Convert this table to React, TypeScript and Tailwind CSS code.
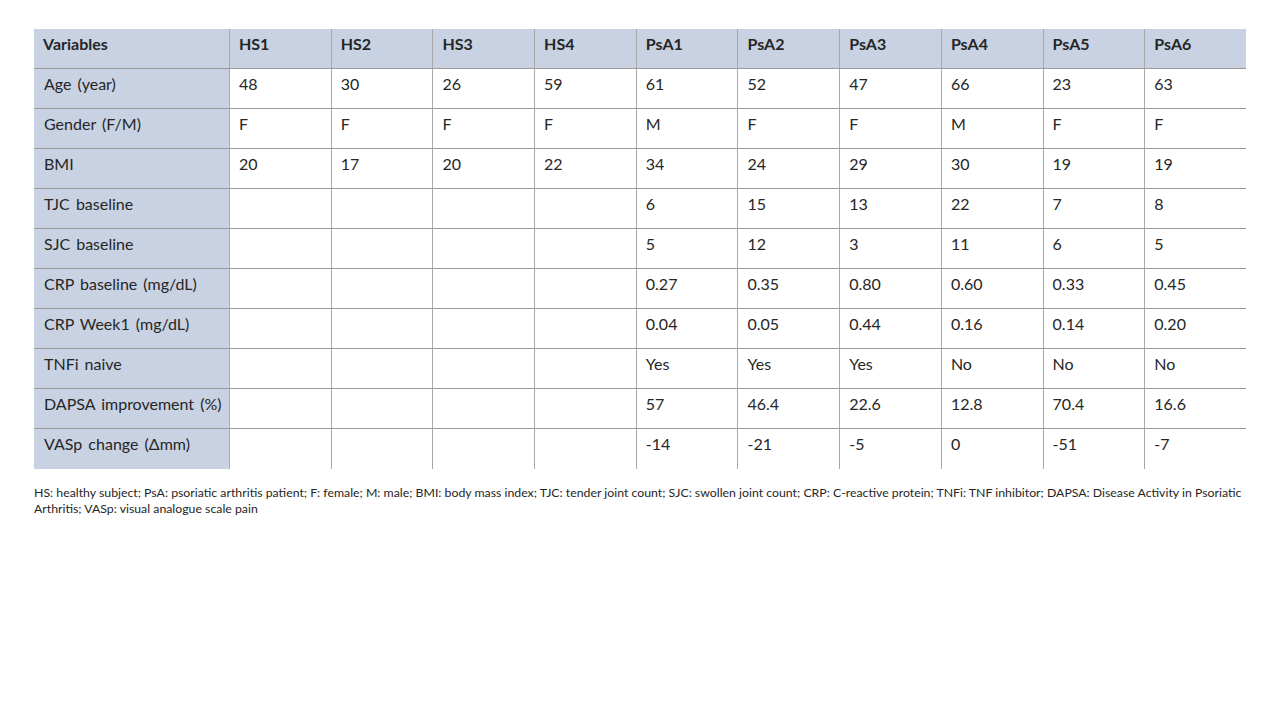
import React from "react";

const headers = ["Variables", "HS1", "HS2", "HS3", "HS4", "PsA1", "PsA2", "PsA3", "PsA4", "PsA5", "PsA6"];
const rows: string[][] = [
  ["Age (year)", "48", "30", "26", "59", "61", "52", "47", "66", "23", "63"],
  ["Gender (F/M)", "F", "F", "F", "F", "M", "F", "F", "M", "F", "F"],
  ["BMI", "20", "17", "20", "22", "34", "24", "29", "30", "19", "19"],
  ["TJC baseline", "", "", "", "", "6", "15", "13", "22", "7", "8"],
  ["SJC baseline", "", "", "", "", "5", "12", "3", "11", "6", "5"],
  ["CRP baseline (mg/dL)", "", "", "", "", "0.27", "0.35", "0.80", "0.60", "0.33", "0.45"],
  ["CRP Week1 (mg/dL)", "", "", "", "", "0.04", "0.05", "0.44", "0.16", "0.14", "0.20"],
  ["TNFi naive", "", "", "", "", "Yes", "Yes", "Yes", "No", "No", "No"],
  ["DAPSA improvement (%)", "", "", "", "", "57", "46.4", "22.6", "12.8", "70.4", "16.6"],
  ["VASp change (\u0394mm)", "", "", "", "", "-14", "-21", "-5", "0", "-51", "-7"],
];

export default function App() {
  return (
    <div
      className="w-[1280px] h-[720px] bg-white text-[#262626] pt-[29px] pl-[34px]"
      style={{ fontFamily: "Lato, 'Open Sans', sans-serif" }}
    >
      <div className="w-[1212px] grid grid-cols-[195px_repeat(10,1fr)] text-[16px] leading-[20px]">
        {headers.map((h, i) => (
          <div
            key={h}
            className={`h-[40px] bg-[#c8d2e3] font-bold pt-[5px] border-b border-[#9a9a9a] ${i === 0 ? "pl-[9px]" : "pl-[9px] border-l border-l-[#a8a8a8]"}`}
          >
            {h}
          </div>
        ))}
        {rows.map((r, ri) =>
          r.map((c, ci) => (
            <div
              key={`${ri}-${ci}`}
              className={`h-[40px] pt-[5px] whitespace-pre [word-spacing:2px] ${ri < rows.length - 1 ? "border-b border-[#9a9a9a]" : ""} ${ci === 0 ? "pl-[10px] bg-[#c8d2e3]" : "pl-[9px] bg-white border-l border-l-[#a8a8a8]"}`}
            >
              {c}
            </div>
          ))
        )}
      </div>
      <div className="mt-[16px] text-[12.3px] leading-[16px] w-[1215px]">
        <div className="whitespace-nowrap">
          HS: healthy subject; PsA: psoriatic arthritis patient; F: female; M: male; BMI: body mass index; TJC: tender joint count; SJC: swollen joint count; CRP: C-reactive protein; TNFi: TNF inhibitor; DAPSA: Disease Activity in Psoriatic
        </div>
        <div className="whitespace-nowrap">Arthritis; VASp: visual analogue scale pain</div>
      </div>
    </div>
  );
}
